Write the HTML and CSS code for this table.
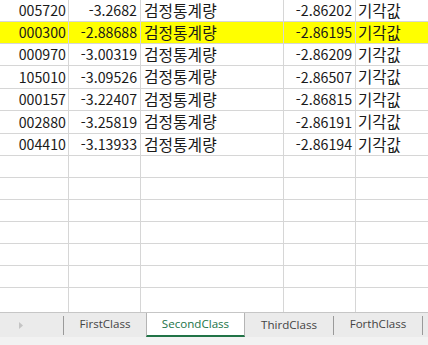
FILE: index.html
```html
<!DOCTYPE html>
<html lang="ko">
<head>
<meta charset="utf-8">
<title>Sheet</title>
<link rel="stylesheet" href="styles.css">
</head>
<body>
<div class="app">
  <div class="grid">
    <div class="row"><div class="c a">005720</div><div class="c b">-3.2682</div><div class="c t">검정통계량</div><div class="c d">-2.86202</div><div class="c e">기각값</div></div>
    <div class="row hl"><div class="c a">000300</div><div class="c b">-2.88688</div><div class="c t">검정통계량</div><div class="c d">-2.86195</div><div class="c e">기각값</div></div>
    <div class="row"><div class="c a">000970</div><div class="c b">-3.00319</div><div class="c t">검정통계량</div><div class="c d">-2.86209</div><div class="c e">기각값</div></div>
    <div class="row tall"><div class="c a">105010</div><div class="c b">-3.09526</div><div class="c t">검정통계량</div><div class="c d">-2.86507</div><div class="c e">기각값</div></div>
    <div class="row"><div class="c a">000157</div><div class="c b">-3.22407</div><div class="c t">검정통계량</div><div class="c d">-2.86815</div><div class="c e">기각값</div></div>
    <div class="row tall"><div class="c a">002880</div><div class="c b">-3.25819</div><div class="c t">검정통계량</div><div class="c d">-2.86191</div><div class="c e">기각값</div></div>
    <div class="row"><div class="c a">004410</div><div class="c b">-3.13933</div><div class="c t">검정통계량</div><div class="c d">-2.86194</div><div class="c e">기각값</div></div>
    <div class="row"><div class="c a"></div><div class="c b"></div><div class="c t"></div><div class="c d"></div><div class="c e"></div></div>
    <div class="row"><div class="c a"></div><div class="c b"></div><div class="c t"></div><div class="c d"></div><div class="c e"></div></div>
    <div class="row"><div class="c a"></div><div class="c b"></div><div class="c t"></div><div class="c d"></div><div class="c e"></div></div>
    <div class="row"><div class="c a"></div><div class="c b"></div><div class="c t"></div><div class="c d"></div><div class="c e"></div></div>
    <div class="row"><div class="c a"></div><div class="c b"></div><div class="c t"></div><div class="c d"></div><div class="c e"></div></div>
    <div class="row"><div class="c a"></div><div class="c b"></div><div class="c t"></div><div class="c d"></div><div class="c e"></div></div>
    <div class="row last"><div class="c a"></div><div class="c b"></div><div class="c t"></div><div class="c d"></div><div class="c e"></div></div>
  </div>
  <div class="tabbar">
    <div class="nav">
      <svg class="arrow" width="4" height="7" viewBox="0 0 4 7"><path d="M0 0 L4 3.5 L0 7 Z" fill="#c4c4c4"/></svg>
    </div>
    <div class="tab sep">FirstClass</div>
    <div class="tab active">SecondClass</div>
    <div class="tab">ThirdClass</div>
    <div class="tab sep-r">ForthClass</div>
  </div>
</div>
</body>
</html>
```
FILE: styles.css
```css
html, body {
  margin: 0;
  padding: 0;
  background: #ffffff;
}
.app {
  width: 428px;
  height: 345px;
  overflow: hidden;
  display: flex;
  flex-direction: column;
  font-family: "Noto Sans CJK KR", "Noto Sans", sans-serif;
}
.grid {
  flex: 0 0 312px;
  display: flex;
  flex-direction: column;
  overflow: hidden;
}
.row {
  display: grid;
  grid-template-columns: 69px 72px 143px 72px 1fr;
  height: 22px;
  flex: 0 0 auto;
}
.row.tall {
  height: 23px;
}
.row.last {
  height: 24px;
}
.row.hl {
  background: #ffff00;
}
.c {
  border-right: 1px solid #d6d6d6;
  border-bottom: 1px solid #d6d6d6;
  display: flex;
  align-items: center;
  font-size: 14.2px;
  color: #1a1a1a;
  white-space: nowrap;
  overflow: hidden;
  line-height: 1;
}
.row.last .c {
  border-bottom: none;
}
.a, .b, .d {
  justify-content: flex-end;
}
.a {
  padding-right: 2px;
}
.b, .d {
  padding-right: 3px;
}
.t {
  padding-left: 3px;
  font-size: 15.8px;
}
.e {
  padding-left: 2px;
  border-right: none;
  font-size: 15.5px;
}
.tabbar {
  flex: 1 1 auto;
  display: flex;
  align-items: stretch;
  background: #ebebeb;
  border-top: 1px solid #c6c6c6;
  padding-bottom: 8px;
  box-shadow: inset 0 -8px 0 #f2f2f2;
}
.nav {
  width: 63px;
  display: flex;
  align-items: center;
  padding-left: 19px;
  box-sizing: border-box;
}
.tab {
  display: flex;
  align-items: center;
  justify-content: center;
  font-family: "Open Sans", "Noto Sans", sans-serif;
  font-size: 11.6px;
  color: #444444;
  width: 88px;
  position: relative;
  padding-bottom: 1px;
}
.tab.sep {
  width: 82px;
  border-left: 1px solid #9a9a9a;
  margin-top: 3px;
  margin-bottom: 2px;
  padding-bottom: 4px;
}
.tab.active {
  width: 97px;
  background: #ffffff;
  color: #217346;
  border-left: 1px solid #b4b4b4;
  border-right: 1px solid #b4b4b4;
  border-bottom: 2px solid #217346;
  margin-bottom: 0;
}
.tab.sep-r {
  border-left: 1px solid #9a9a9a;
  border-right: 1px solid #9a9a9a;
  margin-top: 3px;
  margin-bottom: 2px;
  padding-bottom: 4px;
}
```
